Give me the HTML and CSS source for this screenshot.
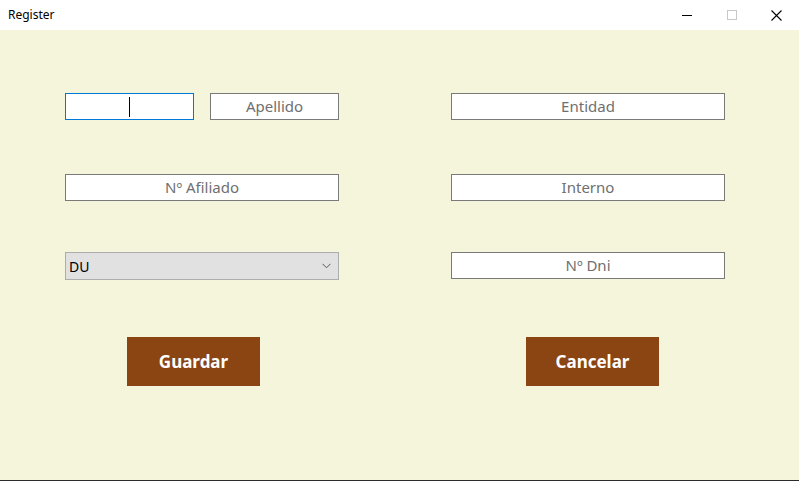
FILE: index.html
```html
<!DOCTYPE html>
<html>
<head>
<meta charset="utf-8">
<link rel="stylesheet" href="styles.css">
</head>
<body>
<div class="window">
  <div class="titlebar">
    <span class="title">Register</span>
    <div class="controls">
      <span class="ctl"><svg width="10" height="10" viewBox="0 0 10 10"><path d="M0 5.5H10" stroke="#000" stroke-width="1"/></svg></span>
      <span class="ctl"><svg width="10" height="10" viewBox="0 0 10 10"><rect x="0.5" y="0.5" width="9" height="9" fill="none" stroke="#c8c8c8" stroke-width="1"/></svg></span>
      <span class="ctl"><svg width="11" height="11" viewBox="0 0 11 11"><path d="M0.5 0.5L10.5 10.5M10.5 0.5L0.5 10.5" stroke="#000" stroke-width="1.1"/></svg></span>
    </div>
  </div>
  <div class="content">
    <div class="form">
      <div class="cell row1">
        <div class="pair">
          <div class="field small focused"><span class="caret"></span></div>
          <div class="field small">Apellido</div>
        </div>
      </div>
      <div class="cell row1 right"><div class="field">Entidad</div></div>

      <div class="cell row2"><div class="field">Nº Afiliado</div></div>
      <div class="cell row2 right"><div class="field">Interno</div></div>

      <div class="cell row3">
        <div class="select">
          <span>DU</span>
          <svg width="9" height="6" viewBox="0 0 9 6"><path d="M0.5 0.8L4.5 4.8L8.5 0.8" fill="none" stroke="#555" stroke-width="1"/></svg>
        </div>
      </div>
      <div class="cell row3 right"><div class="field">Nº Dni</div></div>

      <div class="cell row4"><button class="btn btn-left">Guardar</button></div>
      <div class="cell row4 right"><button class="btn btn-right">Cancelar</button></div>
    </div>
  </div>
</div>
</body>
</html>
```

FILE: styles.css
```css
html, body {
  margin: 0;
  padding: 0;
}
body {
  width: 799px;
  height: 481px;
  overflow: hidden;
  font-family: "Noto Sans", "Open Sans", sans-serif;
}
.window {
  display: flex;
  flex-direction: column;
  height: 480px;
  border-bottom: 1px solid #2b2b2b;
  background: #f5f5dc;
}
.titlebar {
  height: 30px;
  flex: none;
  background: #ffffff;
  display: flex;
  align-items: center;
  justify-content: space-between;
}
.title {
  font-size: 12px;
  color: #000;
  padding-left: 8px;
  margin-top: -1px;
}
.controls {
  display: flex;
  height: 30px;
}
.ctl {
  width: 45px;
  height: 30px;
  display: flex;
  align-items: center;
  justify-content: center;
}
.content {
  flex: 1;
  padding: 63px 0 0 65px;
}
.form {
  display: grid;
  grid-template-columns: 274px 274px;
  column-gap: 112px;
  grid-auto-rows: auto;
  align-items: start;
}
.row2 { margin-top: 54px; }
.row3 { margin-top: 51px; }
.row4 { margin-top: 57px; }
.pair {
  display: flex;
  gap: 16px;
}
.field {
  box-sizing: border-box;
  height: 27px;
  width: 274px;
  border: 1px solid #7a7a7a;
  background: #ffffff;
  color: #6f6f6f;
  font-size: 15px;
  display: flex;
  align-items: center;
  justify-content: center;
  line-height: 1;
  padding-bottom: 1px;
}
.row3 .field { margin-top: 0; }
.field.small {
  width: 129px;
}
.field.focused {
  border-color: #0078d7;
}
.caret {
  display: block;
  width: 1px;
  height: 20px;
  background: #000;
  margin-top: 1px;
}
.select {
  box-sizing: border-box;
  height: 28px;
  width: 274px;
  background: #e1e1e1;
  border: 1px solid #adadad;
  display: flex;
  align-items: center;
  justify-content: space-between;
  padding: 0 7px 0 3px;
  font-size: 14px;
  color: #000;
}
.btn {
  box-sizing: border-box;
  width: 133px;
  height: 49px;
  border: none;
  background: #8b4513;
  color: #ffffff;
  font-family: "Noto Sans", "Open Sans", sans-serif;
  font-weight: bold;
  font-size: 17px;
  padding: 0;
  display: block;
}
.btn-left { margin-left: 62px; }
.btn-right { margin-left: 75px; }
```
